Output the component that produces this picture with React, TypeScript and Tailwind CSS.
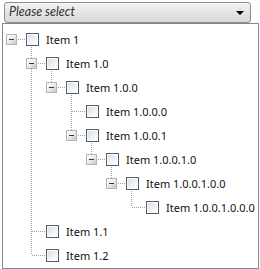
import * as React from "react";

interface TreeNode {
  label: string;
  children?: TreeNode[];
}

interface FlatRow {
  label: string;
  level: number;
  hasChildren: boolean;
  isLast: boolean;
  ancestorsLast: boolean[]; // index k = is ancestor at level k the last sibling
}

const tree: TreeNode[] = [
  {
    label: "Item 1",
    children: [
      {
        label: "Item 1.0",
        children: [
          {
            label: "Item 1.0.0",
            children: [
              { label: "Item 1.0.0.0" },
              {
                label: "Item 1.0.0.1",
                children: [
                  {
                    label: "Item 1.0.0.1.0",
                    children: [
                      {
                        label: "Item 1.0.0.1.0.0",
                        children: [{ label: "Item 1.0.0.1.0.0.0" }],
                      },
                    ],
                  },
                ],
              },
            ],
          },
        ],
      },
      { label: "Item 1.1" },
      { label: "Item 1.2" },
    ],
  },
];

function flatten(nodes: TreeNode[], level: number, ancestors: boolean[], out: FlatRow[]) {
  nodes.forEach((n, i) => {
    const isLast = i === nodes.length - 1;
    const hasChildren = !!n.children && n.children.length > 0;
    out.push({ label: n.label, level, hasChildren, isLast, ancestorsLast: ancestors });
    if (hasChildren) flatten(n.children!, level + 1, [...ancestors, isLast], out);
  });
  return out;
}

const rows = flatten(tree, 0, [], []);

const colX = (k: number) => 8.5 + 20 * k;

function RowLines({ row }: { row: FlatRow }) {
  const segs: React.ReactNode[] = [];
  const L = row.level;
  // continuation lines for ancestors
  for (let k = 1; k < L; k++) {
    if (!row.ancestorsLast[k]) {
      segs.push(<line key={"a" + k} x1={colX(k)} y1={0} x2={colX(k)} y2={24} />);
    }
  }
  if (L >= 1) {
    segs.push(
      <line key="own" x1={colX(L)} y1={0} x2={colX(L)} y2={row.isLast ? 12 : 24} />,
    );
  }
  // horizontal to checkbox
  segs.push(<line key="h" x1={colX(L)} y1={12.5} x2={23 + 20 * L} y2={12.5} />);
  if (row.hasChildren) {
    segs.push(<line key="c" x1={colX(L + 1)} y1={18} x2={colX(L + 1)} y2={24} />);
  }
  return (
    <svg
      className="absolute left-0 top-0"
      width={256}
      height={24}
      stroke="#a0a0a0"
      strokeWidth={1}
      strokeDasharray="1 1"
      shapeRendering="crispEdges"
    >
      {segs}
    </svg>
  );
}

function Expander() {
  return (
    <div className="relative w-[11px] h-[11px] border border-[#b4b4b4] bg-gradient-to-br from-white via-[#ececec] to-[#c4c4c4] flex items-center justify-center">
      <div className="w-[5px] h-px bg-[#3a3a3a]" />
    </div>
  );
}

function CheckBox() {
  return (
    <div className="w-[13px] h-[13px] border border-[#4f5e6e] bg-white p-px">
      <div className="w-full h-full bg-gradient-to-br from-[#d9dee4] via-[#eef0f2] to-white" />
    </div>
  );
}

export default function App() {
  return (
    <div
      className="w-[260px] h-[269px] bg-white relative"
      style={{ fontFamily: '"Noto Sans", "Open Sans", sans-serif' }}
    >
      <div className="pt-[2px] pl-[4px]">
        <div className="w-[247px] h-[21px] rounded-[3px] border border-[#8e8f8f] bg-gradient-to-b from-[#f3f3f3] to-[#d6d6d6] flex items-center justify-between pl-[4px] pr-[6px]">
          <span className="italic text-[12.5px] text-[#333] leading-none font-['Lato',sans-serif]">
            Please select
          </span>
          <span className="w-0 h-0 border-l-[4px] border-r-[4px] border-t-[4px] border-l-transparent border-r-transparent border-t-black" />
        </div>
      </div>
      <div className="ml-[2px] w-[257px] h-[246px] border border-[#828790] bg-white pt-[3px]">
        {rows.map((row) => (
          <div key={row.label} className="relative h-[24px]">
            <RowLines row={row} />
            <div
              className="relative flex items-center h-full"
              style={{ paddingLeft: 3 + 20 * row.level }}
            >
              {row.hasChildren ? <Expander /> : <div className="w-[11px] h-[11px]" />}
              <div className="ml-[9px]">
                <CheckBox />
              </div>
              <span className="ml-[7px] text-[11px] text-[#111] leading-none whitespace-nowrap">
                {row.label}
              </span>
            </div>
          </div>
        ))}
      </div>
    </div>
  );
}
